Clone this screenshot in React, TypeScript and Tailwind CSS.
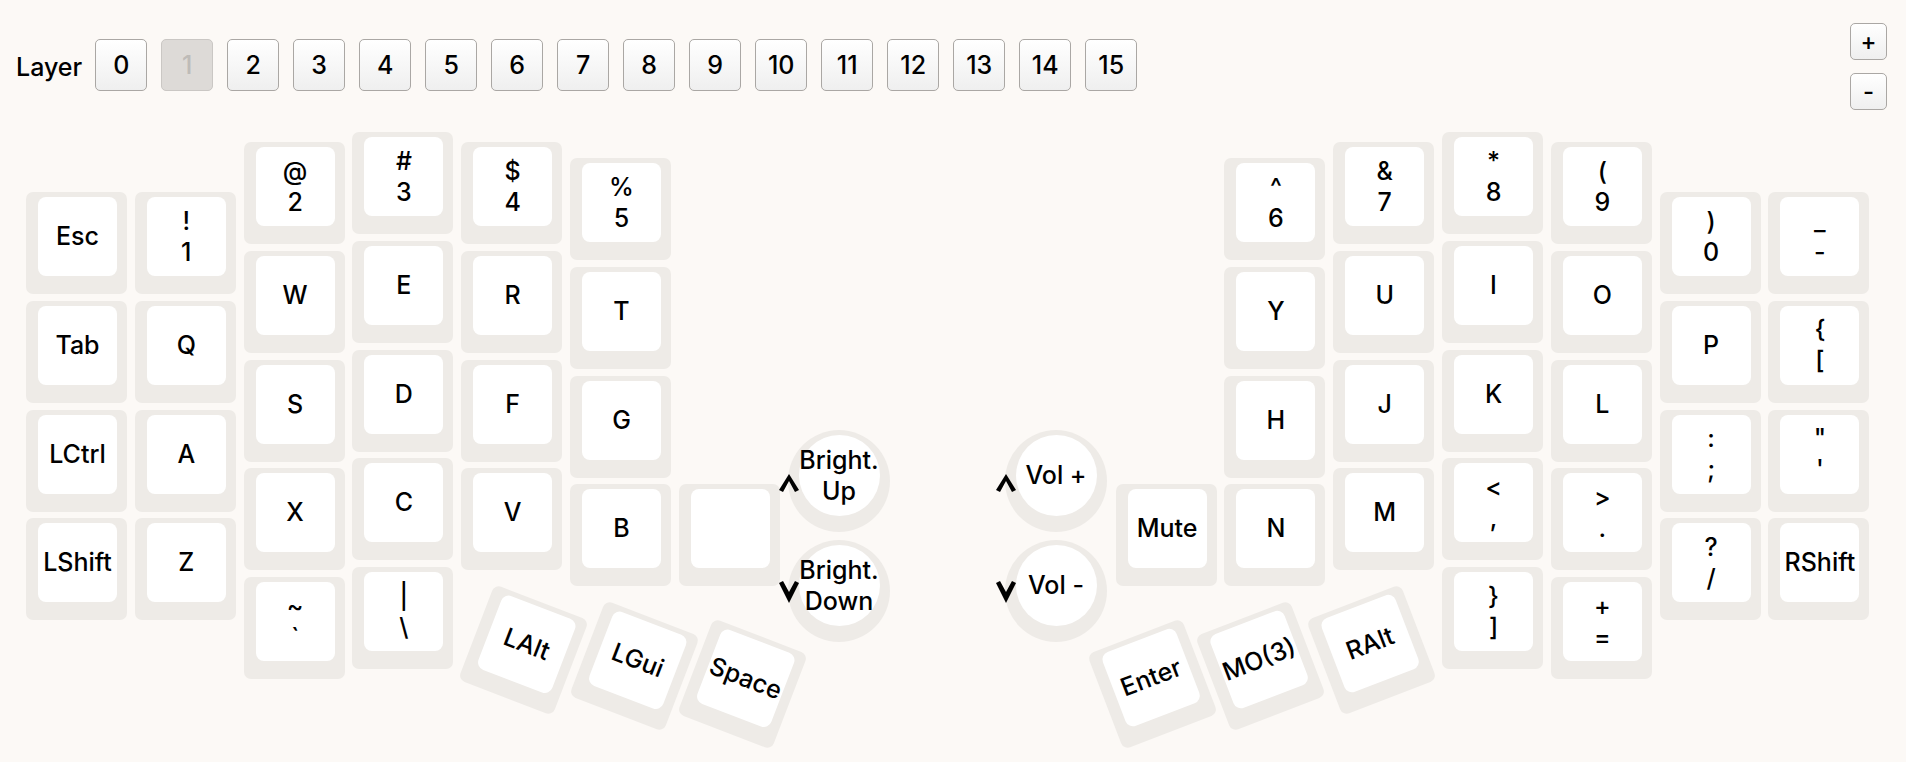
import React from "react";

type Label = string | [string, string];

interface KeyDef {
  x: number;
  y: number;
  label: Label;
  rot?: number;
}

const U = 108.8;
const TOP = 120; // canvas starts below the layer bar

// column helper: builds a stack of keys going down from the first row
function column(x: number, y: number, labels: Label[]): KeyDef[] {
  return labels.map((label, i) => ({ x, y: y + i * U - TOP, label }));
}

const leftX = (i: number) => 26 + i * U;
const rightX = (i: number) => 1115.6 + i * U;

const keys: KeyDef[] = [
  // left half
  ...column(leftX(0), 192, ["Esc", "Tab", "LCtrl", "LShift"]),
  ...column(leftX(1), 192, [["!", "1"], "Q", "A", "Z"]),
  ...column(leftX(2), 142, [["@", "2"], "W", "S", "X", ["~", "`"]]),
  ...column(leftX(3), 132, [["#", "3"], "E", "D", "C", ["|", "\\"]]),
  ...column(leftX(4), 142, [["$", "4"], "R", "F", "V"]),
  ...column(leftX(5), 158, [["%", "5"], "T", "G", "B"]),
  { x: leftX(6), y: 158 + 3 * U - TOP, label: "" },
  // right half
  { x: rightX(0), y: 158 + 3 * U - TOP, label: "Mute" },
  ...column(rightX(1), 158, [["^", "6"], "Y", "H", "N"]),
  ...column(rightX(2), 142, [["&", "7"], "U", "J", "M"]),
  ...column(rightX(3), 132, [["*", "8"], "I", "K", ["<", ","], ["}", "]"]]),
  ...column(rightX(4), 142, [["(", "9"], "O", "L", [">", "."], ["+", "="]]),
  ...column(rightX(5), 192, [[")", "0"], "P", [":", ";"], ["?", "/"]]),
  ...column(rightX(6), 192, [["_", "-"], ["{", "["], ['"', "'"], "RShift"]),
];

// thumb keys, given by their centre
const thumbs: { cx: number; cy: number; label: string; rot: number }[] = [
  { cx: 523, cy: 650, label: "LAlt", rot: 21 },
  { cx: 634, cy: 666, label: "LGui", rot: 21 },
  { cx: 742, cy: 684, label: "Space", rot: 21 },
  { cx: 1152.6, cy: 684, label: "Enter", rot: -21 },
  { cx: 1260.6, cy: 666, label: "MO(3)", rot: -21 },
  { cx: 1371.6, cy: 650, label: "RAlt", rot: -21 },
];

thumbs.forEach((t) =>
  keys.push({ x: t.cx - 50.5, y: t.cy - 51 - TOP, label: t.label, rot: t.rot })
);

const encoders = [
  { cx: 839, cy: 481, lines: ["Bright.", "Up"], dir: "up" },
  { cx: 839, cy: 591, lines: ["Bright.", "Down"], dir: "down" },
  { cx: 1056, cy: 481, lines: ["Vol +"], dir: "up" },
  { cx: 1056, cy: 591, lines: ["Vol -"], dir: "down" },
];

function Key({ k }: { k: KeyDef }) {
  const lines = Array.isArray(k.label) ? k.label : [k.label];
  return (
    <div
      className="absolute w-[101px] h-[102px] rounded-[7px] bg-[#eeebe7] pl-[12px] pt-[5px]"
      style={{
        left: k.x,
        top: k.y,
        transform: k.rot ? `rotate(${k.rot}deg)` : undefined,
      }}
    >
      <div className="w-[79px] h-[79px] rounded-[8px] bg-white flex flex-col items-center justify-center text-[25px] leading-[31px] text-black whitespace-nowrap">
        {lines.map((l, i) => (
          <span key={i}>{l}</span>
        ))}
      </div>
    </div>
  );
}

function Arrow({ dir }: { dir: string }) {
  if (dir === "up") {
    return (
      <svg width="22" height="22" viewBox="0 0 22 22" className="block">
        <path d="M1 18 L11 2 L21 18 L17 20 L11 9 L5 20 Z" fill="#000" />
      </svg>
    );
  }
  return (
    <svg width="22" height="24" viewBox="0 0 22 24" className="block">
      <path d="M1 3 L5 1 L11 12 L17 1 L21 3 L11 23 Z" fill="#000" />
    </svg>
  );
}

function Encoder({ e }: { e: (typeof encoders)[number] }) {
  return (
    <>
      <div
        className="absolute w-[102px] h-[102px] rounded-full bg-[#eeebe7] pl-[10.5px] pt-[5px]"
        style={{ left: e.cx - 51, top: e.cy - 51 - TOP }}
      >
        <div className="w-[81px] h-[81px] rounded-full bg-white flex flex-col items-center justify-center text-[25px] leading-[31px] text-black whitespace-nowrap">
          {e.lines.map((l, i) => (
            <span key={i}>{l}</span>
          ))}
        </div>
      </div>
      <div
        className="absolute"
        style={{ left: e.cx - 61, top: e.cy - (e.dir === "up" ? 9 : 11) - TOP }}
      >
        <Arrow dir={e.dir} />
      </div>
    </>
  );
}

const layers = Array.from({ length: 16 }, (_, i) => i);

export default function App() {
  const active = 1;
  return (
    <div className="min-h-screen w-full bg-[#fcf9f6] font-[Inter,sans-serif] font-medium text-black overflow-hidden">
      <div className="flex justify-between items-start h-[120px]">
        <div className="flex items-center pt-[39px] pl-[16px]">
          <span className="text-[25px] mr-[13px] pt-[5px]">Layer</span>
          <div className="flex gap-[14px]">
            {layers.map((l) => (
              <button
                key={l}
                className={
                  l === active
                    ? "w-[52px] h-[52px] rounded-[5px] border-[1.5px] border-[#cac7c4] bg-[#dddad7] text-[#bebbb8] text-[25px] pt-[2px] flex items-center justify-center"
                    : "w-[52px] h-[52px] rounded-[5px] border-[1.5px] border-[#aaa7a4] bg-linear-to-b from-white to-[#efefef] text-black text-[25px] pt-[2px] flex items-center justify-center"
                }
              >
                {l}
              </button>
            ))}
          </div>
        </div>
        <div className="flex flex-col gap-[13px] pt-[23px] pr-[19px]">
          <button className="w-[37px] h-[37px] rounded-[5px] border-[1.5px] border-[#aaa7a4] bg-linear-to-b from-white to-[#efefef] text-[24px] leading-none flex items-center justify-center">
            +
          </button>
          <button className="w-[37px] h-[37px] rounded-[5px] border-[1.5px] border-[#aaa7a4] bg-linear-to-b from-white to-[#efefef] text-[24px] leading-none flex items-center justify-center">
            -
          </button>
        </div>
      </div>
      <div className="relative w-full h-[642px]">
        {keys.map((k, i) => (
          <Key key={i} k={k} />
        ))}
        {encoders.map((e, i) => (
          <Encoder key={i} e={e} />
        ))}
      </div>
    </div>
  );
}
